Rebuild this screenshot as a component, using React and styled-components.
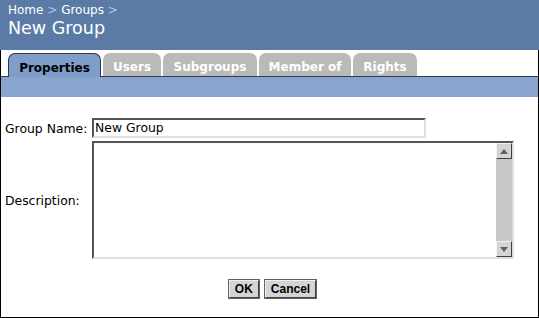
import React from "react";
import styled, { createGlobalStyle } from "styled-components";

const Global = createGlobalStyle`
  html, body { margin: 0; padding: 0; background: #fff; }
  body { font-family: "DejaVu Sans", Verdana, sans-serif; }
`;

const Shell = styled.div`
  box-sizing: border-box;
  width: 539px;
  height: 318px;
  border: 1px solid #000;
  border-top: none;
  display: flex;
  flex-direction: column;
  background: #fff;
`;

const Header = styled.div`
  height: 50px;
  margin: 0 -1px;
  background: #5b7ba6;
  padding: 3px 0 0 8px;
  box-sizing: border-box;
  color: #fff;
`;

const Crumbs = styled.div`
  font-size: 12px;
  line-height: 14px;
  color: #fff;
`;

const Sep = styled.span`
  color: #a9c8f0;
`;

const Title = styled.div`
  font-size: 17.5px;
  line-height: 20px;
  margin-top: 1px;
`;

const TabStrip = styled.div`
  display: flex;
  align-items: flex-end;
  gap: 2px;
  margin-top: 3px;
  padding-left: 7px;
  height: 23px;
  border-bottom: 1px solid #2c3a58;
`;

const Tab = styled.div`
  box-sizing: border-box;
  height: ${(p) => (p.$active ? "24px" : "23px")};
  margin-bottom: ${(p) => (p.$active ? "-1px" : "0")};
  width: ${(p) => p.$w}px;
  background: ${(p) => (p.$active ? "#7f9dc9" : "#bababa")};
  border-radius: 7px 7px 0 0;
  border: ${(p) => (p.$active ? "1px solid #2b3550" : "none")};
  border-bottom: none;
  color: ${(p) => (p.$active ? "#000" : "#fff")};
  font-weight: bold;
  font-size: 12px;
  display: flex;
  align-items: center;
  justify-content: center;
  padding-top: 4px;
`;

const Bar = styled.div`
  height: 20px;
  background: #8aa5cd;
`;

const Form = styled.div`
  display: grid;
  grid-template-columns: 87px auto;
  row-gap: 3px;
  align-items: center;
  padding: 21px 0 0 4px;
`;

const Label = styled.div`
  color: #000;
  font-size: 12.4px;
`;

const TextInput = styled.div`
  box-sizing: border-box;
  width: 334px;
  height: 20px;
  border: 2px solid;
  border-color: #555 #e0e0e0 #e0e0e0 #555;
  font-size: 12.4px;
  line-height: 16px;
  padding-left: 1px;
`;

const AreaBox = styled.div`
  box-sizing: border-box;
  width: 422px;
  height: 118px;
  border: 2px solid;
  border-color: #555 #e0e0e0 #e0e0e0 #555;
  display: flex;
  justify-content: flex-end;
`;

const ScrollTrack = styled.div`
  width: 16px;
  background: #c8c8c8;
  display: flex;
  flex-direction: column;
  justify-content: space-between;
`;

const ScrollBtn = styled.div`
  box-sizing: border-box;
  width: 16px;
  height: 16px;
  background: #d4d4d4;
  border: 1px solid;
  border-color: #f4f4f4 #404040 #404040 #f4f4f4;
  display: flex;
  align-items: center;
  justify-content: center;
`;

const Buttons = styled.div`
  display: flex;
  justify-content: center;
  gap: 4px;
  margin-top: 20px;
  padding-left: 6px;
`;

const Button = styled.button`
  box-sizing: border-box;
  height: 20px;
  padding: 0 5px;
  background: #d4d4d4;
  border: 2px solid;
  border-color: #f0f0f0 #404040 #404040 #f0f0f0;
  outline: 1px solid #606060;
  outline-offset: -1px;
  font-family: "Liberation Sans", Arial, sans-serif;
  font-weight: bold;
  font-size: 12px;
  color: #000;
  line-height: 14px;
`;

const Arrow = ({ up }) => (
  <svg width="8" height="5" viewBox="0 0 8 5">
    <polygon points={up ? "4,0 8,5 0,5" : "0,0 8,0 4,5"} fill="#606060" />
  </svg>
);

export default function App() {
  const tabs = [
    { label: "Properties", w: 93, active: true },
    { label: "Users", w: 58 },
    { label: "Subgroups", w: 94 },
    { label: "Member of", w: 92 },
    { label: "Rights", w: 64 },
  ];
  return (
    <>
      <Global />
      <Shell>
        <Header>
          <Crumbs>
            Home <Sep>&gt;</Sep> Groups <Sep>&gt;</Sep>
          </Crumbs>
          <Title>New Group</Title>
        </Header>
        <TabStrip>
          {tabs.map((t) => (
            <Tab key={t.label} $w={t.w} $active={t.active}>
              {t.label}
            </Tab>
          ))}
        </TabStrip>
        <Bar />
        <Form>
          <Label>Group Name:</Label>
          <TextInput>New Group</TextInput>
          <Label>Description:</Label>
          <AreaBox>
            <ScrollTrack>
              <ScrollBtn>
                <Arrow up />
              </ScrollBtn>
              <ScrollBtn>
                <Arrow />
              </ScrollBtn>
            </ScrollTrack>
          </AreaBox>
        </Form>
        <Buttons>
          <Button>OK</Button>
          <Button>Cancel</Button>
        </Buttons>
      </Shell>
    </>
  );
}
